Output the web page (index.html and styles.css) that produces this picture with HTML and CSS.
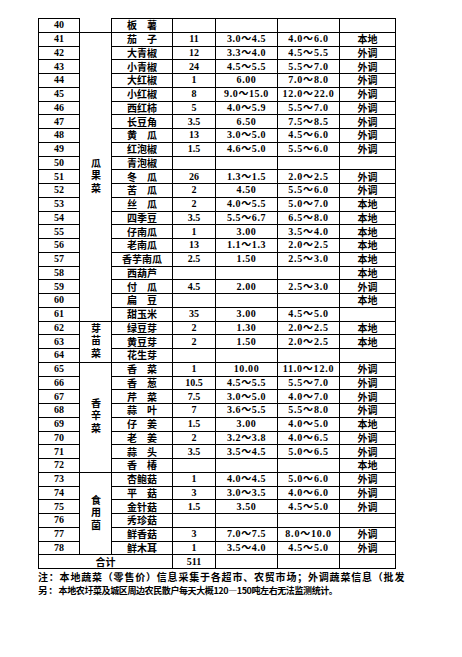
FILE: index.html
```html
<!DOCTYPE html>
<html lang="zh">
<head>
<meta charset="utf-8">
<title>蔬菜价格表</title>
<link rel="stylesheet" href="styles.css">
</head>
<body>
<div class="page">
<table class="veg">
<colgroup>
<col class="c-no"><col class="c-cat"><col class="c-name"><col class="c-qty"><col class="c-retail"><col class="c-whole"><col class="c-src">
</colgroup>
<tbody>
<tr><td>40</td><td class="cat-cont"></td><td class="name">板　薯</td><td></td><td></td><td></td><td></td></tr>
<tr><td>41</td><td class="cat" rowspan="21"><span class="vt">瓜果菜</span></td><td class="name">茄　子</td><td>11</td><td class="p">3.0～4.5</td><td class="p w">4.0～6.0</td><td class="src">本地</td></tr>
<tr><td>42</td><td class="name">大青椒</td><td>12</td><td class="p">3.3～4.0</td><td class="p w">4.5～5.5</td><td class="src">外调</td></tr>
<tr><td>43</td><td class="name">小青椒</td><td>24</td><td class="p">4.5～5.5</td><td class="p w">5.5～7.0</td><td class="src">外调</td></tr>
<tr><td>44</td><td class="name">大红椒</td><td>1</td><td class="p">6.00</td><td class="p w">7.0～8.0</td><td class="src">外调</td></tr>
<tr><td>45</td><td class="name">小红椒</td><td>8</td><td class="p">9.0～15.0</td><td class="p w">12.0～22.0</td><td class="src">外调</td></tr>
<tr><td>46</td><td class="name">西红柿</td><td>5</td><td class="p">4.0～5.9</td><td class="p w">5.5～7.0</td><td class="src">外调</td></tr>
<tr><td>47</td><td class="name">长豆角</td><td>3.5</td><td class="p">6.50</td><td class="p w">7.5～8.5</td><td class="src">外调</td></tr>
<tr><td>48</td><td class="name">黄　瓜</td><td>13</td><td class="p">3.0～5.0</td><td class="p w">4.5～6.0</td><td class="src">外调</td></tr>
<tr><td>49</td><td class="name">红泡椒</td><td>1.5</td><td class="p">4.6～5.0</td><td class="p w">5.5～6.0</td><td class="src">外调</td></tr>
<tr><td>50</td><td class="name">青泡椒</td><td></td><td></td><td></td><td></td></tr>
<tr><td>51</td><td class="name">冬　瓜</td><td>26</td><td class="p">1.3～1.5</td><td class="p w">2.0～2.5</td><td class="src">外调</td></tr>
<tr><td>52</td><td class="name">苦　瓜</td><td>2</td><td class="p">4.50</td><td class="p w">5.5～6.0</td><td class="src">外调</td></tr>
<tr><td>53</td><td class="name">丝　瓜</td><td>2</td><td class="p">4.0～5.5</td><td class="p w">5.0～7.0</td><td class="src">本地</td></tr>
<tr><td>54</td><td class="name">四季豆</td><td>3.5</td><td class="p">5.5～6.7</td><td class="p w">6.5～8.0</td><td class="src">本地</td></tr>
<tr><td>55</td><td class="name">仔南瓜</td><td>1</td><td class="p">3.00</td><td class="p w">3.5～4.0</td><td class="src">本地</td></tr>
<tr><td>56</td><td class="name">老南瓜</td><td>13</td><td class="p">1.1～1.3</td><td class="p w">2.0～2.5</td><td class="src">本地</td></tr>
<tr><td>57</td><td class="name">香芋南瓜</td><td>2.5</td><td class="p">1.50</td><td class="p w">2.5～3.0</td><td class="src">本地</td></tr>
<tr><td>58</td><td class="name">西葫芦</td><td></td><td></td><td></td><td class="src">本地</td></tr>
<tr><td>59</td><td class="name">付　瓜</td><td>4.5</td><td class="p">2.00</td><td class="p w">2.5～3.0</td><td class="src">外调</td></tr>
<tr><td>60</td><td class="name">扁　豆</td><td></td><td></td><td></td><td class="src">本地</td></tr>
<tr><td>61</td><td class="name">甜玉米</td><td>35</td><td class="p">3.00</td><td class="p w">4.5～5.0</td><td></td></tr>
<tr><td>62</td><td class="cat" rowspan="3"><span class="vt">芽苗菜</span></td><td class="name">绿豆芽</td><td>2</td><td class="p">1.30</td><td class="p w">2.0～2.5</td><td class="src">本地</td></tr>
<tr><td>63</td><td class="name">黄豆芽</td><td>2</td><td class="p">1.50</td><td class="p w">2.0～2.5</td><td class="src">本地</td></tr>
<tr><td>64</td><td class="name">花生芽</td><td></td><td></td><td></td><td></td></tr>
<tr><td>65</td><td class="cat" rowspan="8"><span class="vt">香辛菜</span></td><td class="name">香　菜</td><td>1</td><td class="p">10.00</td><td class="p w">11.0～12.0</td><td class="src">外调</td></tr>
<tr><td>66</td><td class="name">香　葱</td><td>10.5</td><td class="p">4.5～5.5</td><td class="p w">5.5～7.0</td><td class="src">外调</td></tr>
<tr><td>67</td><td class="name">芹　菜</td><td>7.5</td><td class="p">3.0～5.0</td><td class="p w">4.0～7.0</td><td class="src">外调</td></tr>
<tr><td>68</td><td class="name">蒜　叶</td><td>7</td><td class="p">3.6～5.5</td><td class="p w">5.5～8.0</td><td class="src">外调</td></tr>
<tr><td>69</td><td class="name">仔　姜</td><td>1.5</td><td class="p">3.00</td><td class="p w">4.0～5.0</td><td class="src">本地</td></tr>
<tr><td>70</td><td class="name">老　姜</td><td>2</td><td class="p">3.2～3.8</td><td class="p w">4.0～6.5</td><td class="src">外调</td></tr>
<tr><td>71</td><td class="name">蒜　头</td><td>3.5</td><td class="p">3.5～4.5</td><td class="p w">5.0～6.5</td><td class="src">外调</td></tr>
<tr><td>72</td><td class="name">香　椿</td><td></td><td></td><td></td><td class="src">本地</td></tr>
<tr><td>73</td><td class="cat" rowspan="6"><span class="vt">食用菌</span></td><td class="name">杏鲍菇</td><td>1</td><td class="p">4.0～4.5</td><td class="p w">5.0～6.0</td><td class="src">外调</td></tr>
<tr><td>74</td><td class="name">平　菇</td><td>3</td><td class="p">3.0～3.5</td><td class="p w">4.0～6.0</td><td class="src">外调</td></tr>
<tr><td>75</td><td class="name">金针菇</td><td>1.5</td><td class="p">3.50</td><td class="p w">4.5～5.0</td><td class="src">外调</td></tr>
<tr><td>76</td><td class="name">秀珍菇</td><td></td><td></td><td></td><td></td></tr>
<tr><td>77</td><td class="name">鲜香菇</td><td>3</td><td class="p">7.0～7.5</td><td class="p w">8.0～10.0</td><td class="src">外调</td></tr>
<tr><td>78</td><td class="name">鲜木耳</td><td>1</td><td class="p">3.5～4.0</td><td class="p w">4.5～5.0</td><td class="src">外调</td></tr>
<tr><td colspan="3" class="name">合计</td><td>511</td><td></td><td></td><td></td></tr>
</tbody>
</table>
<p class="note note-1">注：本地蔬菜（零售价）信息采集于各超市、农贸市场；外调蔬菜信息（批发</p>
<p class="note note-2"><span class="lead">另：</span>本地农圩菜及城区周边农民散户每天大概120—150吨左右无法监测统计。</p>
</div>
</body>
</html>
```

FILE: styles.css
```css
html, body {
  margin: 0;
  padding: 0;
  background: #ffffff;
}

.page {
  padding: 18px 0 0 38px;
  color: #000000;
  font-family: "Liberation Serif", "Noto Sans CJK SC", serif;
  font-weight: 700;
}

.veg {
  border-collapse: collapse;
  table-layout: fixed;
  width: 357px;
}

.c-no { width: 41px; }
.c-cat { width: 32px; }
.c-name { width: 61px; }
.c-qty { width: 43px; }
.c-retail { width: 62px; }
.c-whole { width: 62px; }
.c-src { width: 56px; }

.veg tr {
  height: 13.75px;
}

.veg td {
  border: 1px solid #000000;
  padding: 0;
  height: 12.75px;
  font-size: 10px;
  line-height: 12px;
  text-align: center;
  vertical-align: middle;
  white-space: nowrap;
  overflow: hidden;
}

.veg td.name,
.veg td.src,
.veg td.cat {
  font-family: "Noto Sans CJK SC", sans-serif;
  font-size: 10px;
  line-height: 12px;
}

.veg td.cat {
  line-height: 10px;
}

.vt {
  display: inline-block;
  writing-mode: vertical-rl;
  text-orientation: upright;
  letter-spacing: 2.6px;
  line-height: 10px;
  vertical-align: middle;
}

.veg td.cat-cont {
  border-top-style: hidden;
}

.veg td.p {
  letter-spacing: 0.6px;
}

.veg td.w {
  letter-spacing: 0.8px;
}

.note {
  margin: 0;
  font-family: "Noto Sans CJK SC", sans-serif;
  white-space: nowrap;
}

.note-1 {
  margin-top: 2px;
  font-size: 10px;
  line-height: 12px;
  letter-spacing: 0.8px;
}

.note-2 {
  margin-top: 1px;
  font-size: 9px;
  line-height: 12px;
  letter-spacing: -0.4px;
}

.note-2 .lead {
  font-size: 9.5px;
  letter-spacing: 0.8px;
}
```
